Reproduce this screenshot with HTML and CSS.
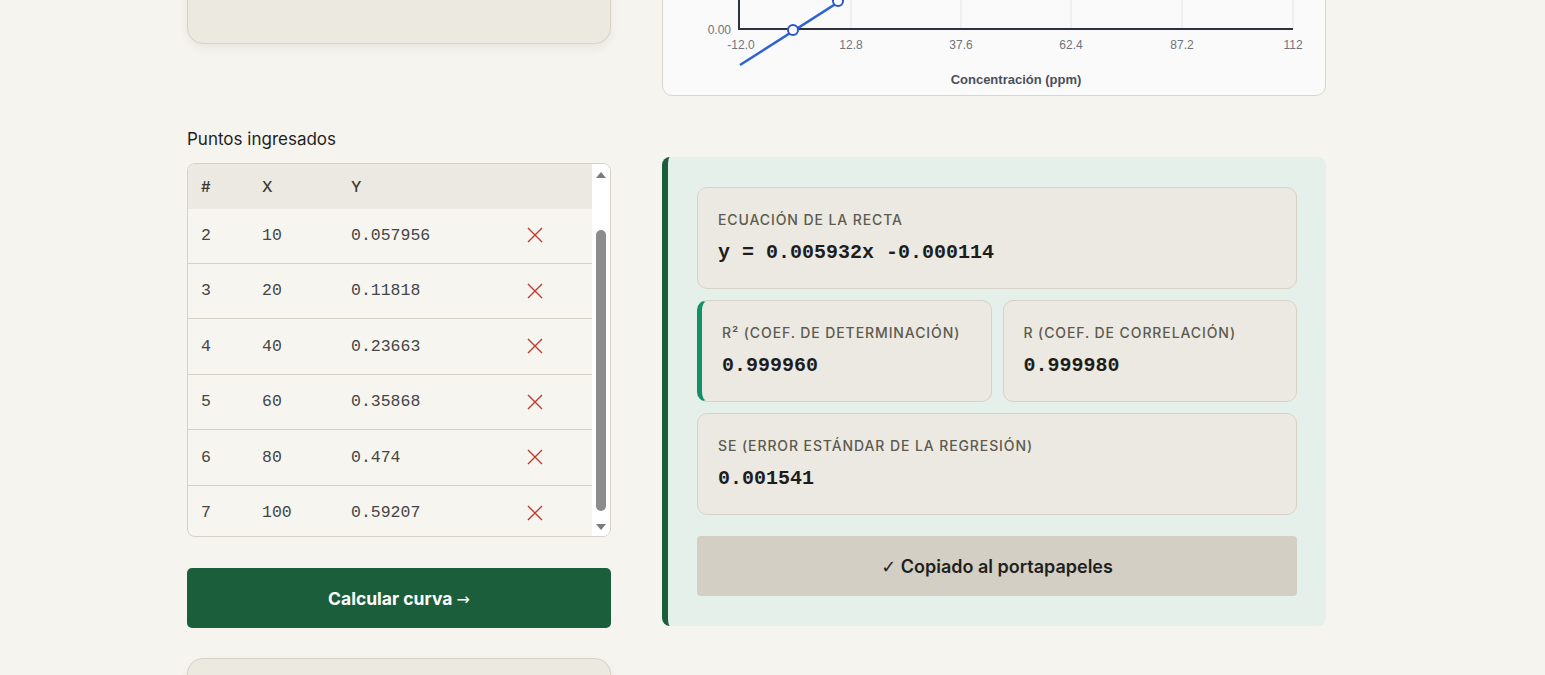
FILE: index.html
```html
<!DOCTYPE html>
<html lang="es">
<head>
    <meta charset="UTF-8">
    <meta name="viewport" content="width=device-width, initial-scale=1.0">
    <title>Curva de calibración</title>
    <link rel="stylesheet" href="styles.css">
</head>
<body>

    <div class="page">

        <!-- Left column: inputs -->
        <div class="col">
            <div class="card card-top"></div>

            <h3 class="section-title">Puntos ingresados</h3>

            <div class="points">
                <div class="points-table">
                    <div class="points-head">
                        <span>#</span>
                        <span>X</span>
                        <span>Y</span>
                        <span></span>
                    </div>
                    <div class="points-body">
                        <div class="point-row">
                            <span>2</span><span>10</span><span>0.057956</span>
                            <span class="remove"><svg viewBox="0 0 16 16" width="16" height="16"><path d="M1 1 L15 15 M15 1 L1 15"/></svg></span>
                        </div>
                        <div class="point-row">
                            <span>3</span><span>20</span><span>0.11818</span>
                            <span class="remove"><svg viewBox="0 0 16 16" width="16" height="16"><path d="M1 1 L15 15 M15 1 L1 15"/></svg></span>
                        </div>
                        <div class="point-row">
                            <span>4</span><span>40</span><span>0.23663</span>
                            <span class="remove"><svg viewBox="0 0 16 16" width="16" height="16"><path d="M1 1 L15 15 M15 1 L1 15"/></svg></span>
                        </div>
                        <div class="point-row">
                            <span>5</span><span>60</span><span>0.35868</span>
                            <span class="remove"><svg viewBox="0 0 16 16" width="16" height="16"><path d="M1 1 L15 15 M15 1 L1 15"/></svg></span>
                        </div>
                        <div class="point-row">
                            <span>6</span><span>80</span><span>0.474</span>
                            <span class="remove"><svg viewBox="0 0 16 16" width="16" height="16"><path d="M1 1 L15 15 M15 1 L1 15"/></svg></span>
                        </div>
                        <div class="point-row">
                            <span>7</span><span>100</span><span>0.59207</span>
                            <span class="remove"><svg viewBox="0 0 16 16" width="16" height="16"><path d="M1 1 L15 15 M15 1 L1 15"/></svg></span>
                        </div>
                    </div>
                </div>
                <!-- scrollbar look -->
                <div class="scrollbar">
                    <span class="arrow-up"></span>
                    <span class="thumb"></span>
                    <span class="arrow-down"></span>
                </div>
            </div>

            <button class="btn-primary">Calcular curva <span class="arrow">→</span></button>

            <div class="card card-bottom"></div>
        </div>

        <!-- Right column: chart + results -->
        <div class="col">
            <div class="chart-card">
                <svg class="chart" viewBox="0 0 662 95" width="662" height="95">
                    <g class="grid">
                        <line x1="188" y1="0" x2="188" y2="29"/>
                        <line x1="298" y1="0" x2="298" y2="29"/>
                        <line x1="408" y1="0" x2="408" y2="29"/>
                        <line x1="519" y1="0" x2="519" y2="29"/>
                        <line x1="630" y1="0" x2="630" y2="29"/>
                    </g>
                    <g class="axis">
                        <line x1="76" y1="-5" x2="76" y2="29"/>
                        <line x1="75" y1="29" x2="630" y2="29"/>
                    </g>
                    <text class="tick" x="68" y="34" text-anchor="end">0.00</text>
                    <text class="tick" x="78" y="49" text-anchor="middle">-12.0</text>
                    <text class="tick" x="188" y="49" text-anchor="middle">12.8</text>
                    <text class="tick" x="298" y="49" text-anchor="middle">37.6</text>
                    <text class="tick" x="408" y="49" text-anchor="middle">62.4</text>
                    <text class="tick" x="519" y="49" text-anchor="middle">87.2</text>
                    <text class="tick" x="630" y="49" text-anchor="middle">112</text>
                    <line class="fit" x1="77" y1="65" x2="185" y2="-4"/>
                    <circle class="dot" cx="130" cy="30" r="5"/>
                    <circle class="dot" cx="175" cy="1" r="5"/>
                    <text class="axis-title" x="353" y="84" text-anchor="middle">Concentración (ppm)</text>
                </svg>
            </div>

            <div class="results">
                <div class="stat">
                    <div class="stat-label">Ecuación de la recta</div>
                    <div class="stat-value">y = 0.005932x -0.000114</div>
                </div>

                <div class="stat-row">
                    <div class="stat stat-accent">
                        <div class="stat-label">R² (coef. de determinación)</div>
                        <div class="stat-value">0.999960</div>
                    </div>
                    <div class="stat">
                        <div class="stat-label">R (coef. de correlación)</div>
                        <div class="stat-value">0.999980</div>
                    </div>
                </div>

                <div class="stat">
                    <div class="stat-label">SE (error estándar de la regresión)</div>
                    <div class="stat-value">0.001541</div>
                </div>

                <button class="btn-copy"><span class="check">✓</span> Copiado al portapapeles</button>
            </div>
        </div>

    </div>

</body>
</html>
```

FILE: styles.css
```css
   * {
       box-sizing: border-box;
   }

   body {
       margin: 0;
       font-family: Inter, "Noto Sans", sans-serif;
       background-color: #f6f4ef;
       color: #222;
       overflow: hidden;
   }

   /* the view is scrolled down a bit */
   .page {
       width: 1171px;
       margin: -200px auto 0;
       display: grid;
       grid-template-columns: 424px 664px;
       gap: 51px;
       align-items: start;
   }

   .col {
       display: flex;
       flex-direction: column;
   }

   .card {
       background-color: #ece9e1;
       border: 1px solid #d7d2c6;
       border-radius: 16px;
       box-shadow: 0px 4px 10px rgba(0, 0, 0, 0.06);
   }

   .card-top {
       height: 244px;
   }

   .card-bottom {
       height: 200px;
       margin-top: 30px;
   }

   .section-title {
       margin: 83px 0 12px;
       font-size: 17px;
       font-weight: 400;
       line-height: 24px;
       color: #1f1f1f;
   }

   /* POINTS TABLE */
   .points {
       display: flex;
       height: 374px;
       border: 1px solid #d6d1c6;
       border-radius: 8px;
       overflow: hidden;
       background-color: #f7f5f0;
   }

   .points-table {
       flex: 1;
       display: flex;
       flex-direction: column;
       overflow: hidden;
   }

   .points-head,
   .point-row {
       display: grid;
       grid-template-columns: 61px 89px 162px 1fr;
       align-items: center;
   }

   .points-head {
       position: relative;
       z-index: 1;
       height: 45px;
       flex-shrink: 0;
       background-color: #ece9e2;
       font-size: 15px;
       font-weight: 500;
       color: #3b3931;
   }

   .points-head span,
   .point-row span {
       padding-left: 13px;
   }

   .points-body {
       overflow: hidden;
   }

   .point-row {
       height: 55.5px;
       border-bottom: 1px solid #d6d1c7;
       font-family: "Liberation Mono", monospace;
       font-size: 16.5px;
       color: #454545;
   }

   .point-row:first-child {
       margin-top: -1px;
   }

   .point-row .remove {
       padding-left: 27px;
       display: flex;
       align-items: center;
   }

   .remove svg path {
       stroke: #c0392b;
       stroke-width: 1.4;
       fill: none;
   }

   .scrollbar {
       width: 18px;
       background-color: #fff;
       display: flex;
       flex-direction: column;
       align-items: center;
   }

   .arrow-up {
       margin-top: 8px;
       border-left: 5px solid transparent;
       border-right: 5px solid transparent;
       border-bottom: 6px solid #7b7b7b;
   }

   .thumb {
       margin-top: 52px;
       width: 10px;
       height: 281px;
       border-radius: 5px;
       background-color: #8c8c8c;
   }

   .arrow-down {
       margin-top: 13px;
       border-left: 5px solid transparent;
       border-right: 5px solid transparent;
       border-top: 6px solid #7b7b7b;
   }

   .btn-primary {
       margin-top: 31px;
       height: 60px;
       border: none;
       border-radius: 5px;
       background-color: #1b5e3b;
       color: #fff;
       font-family: inherit;
       font-size: 17.5px;
       font-weight: 700;
   }

   .btn-primary .arrow {
       font-family: "DejaVu Sans", sans-serif;
       font-weight: 400;
       font-size: 16px;
   }

   /* CHART */
   .chart-card {
       height: 296px;
       display: flex;
       flex-direction: column;
       justify-content: flex-end;
       background-color: #fafafa;
       border: 1px solid #d9d5ca;
       border-radius: 10px;
       overflow: hidden;
   }

   .chart {
       display: block;
   }

   .chart .grid line {
       stroke: #e6e6e6;
       stroke-width: 1;
   }

   .chart .axis line {
       stroke: #2e3142;
       stroke-width: 2;
   }

   .chart .tick {
       font-family: "Liberation Sans", Arial, sans-serif;
       font-size: 12px;
       fill: #70737c;
   }

   .chart .axis-title {
       font-family: "Liberation Sans", Arial, sans-serif;
       font-size: 13px;
       font-weight: bold;
       fill: #4a4f5c;
   }

   .chart .fit {
       stroke: #2e62d9;
       stroke-width: 2.5;
   }

   .chart .dot {
       fill: #fff;
       stroke: #2a55cc;
       stroke-width: 2;
   }

   /* RESULTS */
   .results {
       margin-top: 61px;
       padding: 30px 29px;
       background-color: #e6f0ea;
       border-left: 6px solid #1b5e3b;
       border-radius: 8px;
       display: flex;
       flex-direction: column;
       gap: 11px;
   }

   .stat-row {
       display: grid;
       grid-template-columns: 1fr 1fr;
       gap: 11px;
   }

   .stat {
       height: 102px;
       padding: 21px 20px 0;
       background-color: #ece9e2;
       border: 1px solid #d7d2c7;
       border-radius: 10px;
   }

   .stat-accent {
       border-left: 5px solid #12906a;
   }

   .stat-label {
       font-size: 14px;
       font-weight: 500;
       line-height: 22px;
       letter-spacing: 0.9px;
       text-transform: uppercase;
       color: #5d5a4f;
   }

   .stat-value {
       margin-top: 10px;
       font-family: "Liberation Mono", monospace;
       font-size: 20px;
       font-weight: bold;
       line-height: 24px;
       color: #1d1d1d;
   }

   .btn-copy {
       margin-top: 10px;
       height: 60px;
       border: none;
       border-radius: 4px;
       background-color: #d3cfc5;
       color: #1f1f1f;
       font-family: inherit;
       font-size: 18px;
       font-weight: 600;
   }

   .btn-copy .check {
       font-family: "DejaVu Sans", sans-serif;
       font-weight: 400;
   }
```
